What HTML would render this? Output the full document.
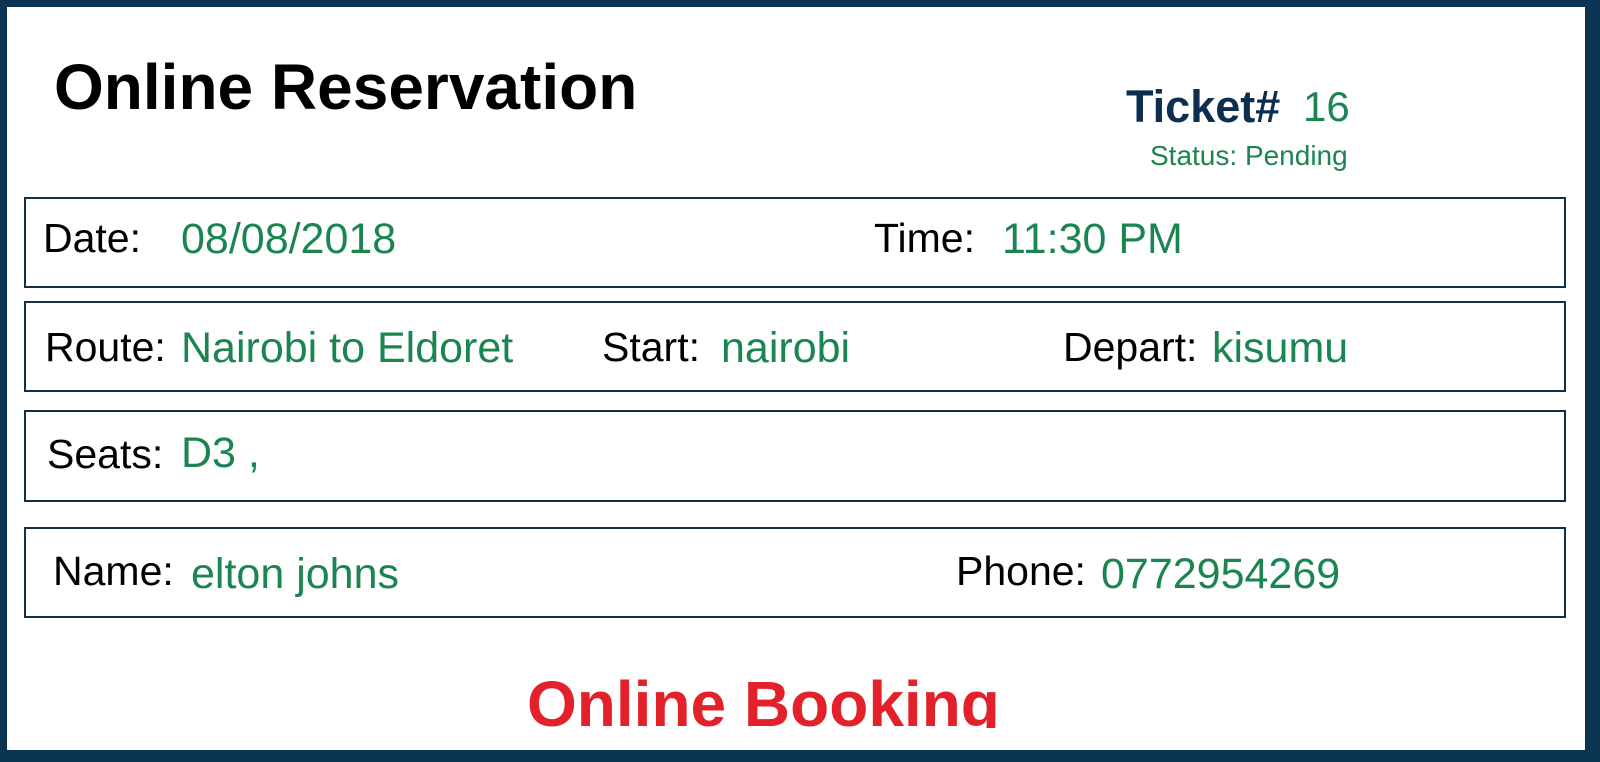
<!DOCTYPE html>
<html><head><meta charset="utf-8"><style>
*{margin:0;padding:0;box-sizing:border-box}
body{width:1600px;height:762px;background:#0b3352;position:relative;overflow:hidden;font-family:"Liberation Sans",Arial,sans-serif}
.card{position:absolute;left:7px;top:7px;width:1578px;height:743px;background:#fff}
.t{position:absolute;white-space:nowrap;line-height:1}
.box{position:absolute;left:24px;width:1542px;border:2px solid #0f2f4a}
.l{color:#000;font-size:41px}
.v{color:#1b8550;font-size:43px}
</style></head><body>
<div class="card"></div>
<div class="t" style="left:54px;top:55px;font-size:64px;font-weight:bold;color:#000">Online Reservation</div>
<div class="t" style="left:1126px;top:84px;font-size:45px;font-weight:bold;color:#0c2f4f">Ticket#</div>
<div class="t" style="left:1303px;top:86px;font-size:42px;color:#1b8550">16</div>
<div class="t" style="left:1150px;top:142px;font-size:28px;color:#1b8550">Status: Pending</div>

<div class="box" style="top:197px;height:91px"></div>
<div class="box" style="top:301px;height:91px"></div>
<div class="box" style="top:410px;height:92px"></div>
<div class="box" style="top:527px;height:91px"></div>

<div class="t l" style="left:43px;top:218px">Date:</div>
<div class="t v" style="left:181px;top:218px">08/08/2018</div>
<div class="t l" style="left:874px;top:218px">Time:</div>
<div class="t v" style="left:1002px;top:218px">11:30 PM</div>

<div class="t l" style="left:45px;top:327px">Route:</div>
<div class="t v" style="left:181px;top:327px">Nairobi to Eldoret</div>
<div class="t l" style="left:602px;top:327px">Start:</div>
<div class="t v" style="left:721px;top:327px">nairobi</div>
<div class="t l" style="left:1063px;top:327px">Depart:</div>
<div class="t v" style="left:1212px;top:327px">kisumu</div>

<div class="t l" style="left:47px;top:434px">Seats:</div>
<div class="t v" style="left:181px;top:432px">D3 ,</div>

<div class="t l" style="left:53px;top:551px">Name:</div>
<div class="t v" style="left:191px;top:553px">elton johns</div>
<div class="t l" style="left:956px;top:551px">Phone:</div>
<div class="t v" style="left:1101px;top:553px">0772954269</div>

<div style="position:absolute;left:520px;top:660px;width:500px;height:68px;overflow:hidden">
<div class="t" style="left:7px;top:12px;font-size:64px;font-weight:bold;color:#e3212b">Online Booking</div>
</div>
</body></html>
